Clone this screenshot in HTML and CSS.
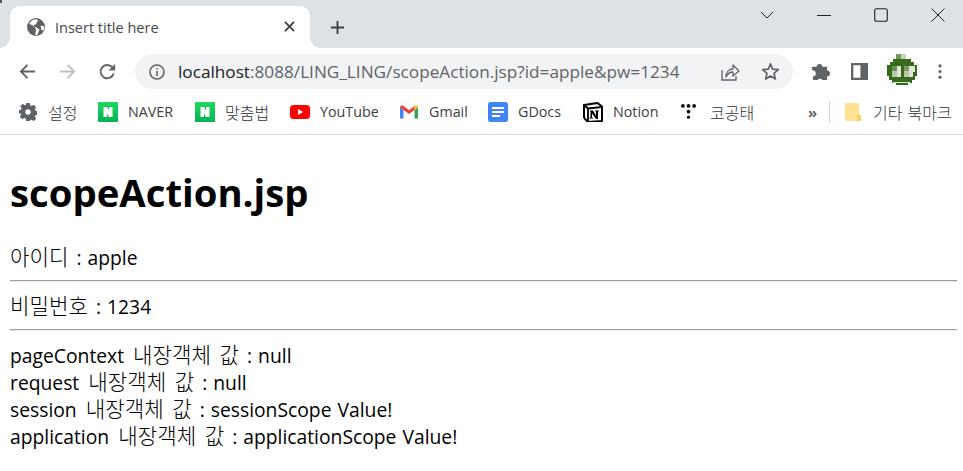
FILE: index.html
```html
<!DOCTYPE html>
<html lang="ko">
<head>
<meta charset="utf-8">
<title>Insert title here</title>
<link rel="stylesheet" href="styles.css">
</head>
<body>
<header class="chrome">
  <div class="tabstrip">
    <div class="tab">
      <svg class="tab-globe" viewBox="0 0 20 20"><circle cx="10" cy="10" r="10" fill="#5f6368"/><path d="M2.500 6.500L7 8.500l2.500 3 .5 2-1 5.500 2.500-.5 1.500-3.500 1-2-3.500-2.500-2-.5-1-2 2.500-1 1-2.500 1.500-1.500-2-1.500-4 .5-3.500 3zM15 8.500l3.500.5.800 2-1 3-2-.5z" fill="#fff"/></svg>
      <span class="tab-title">Insert title here</span>
      <svg class="tab-close" viewBox="0 0 12 12"><path d="M1 1l10 10M11 1L1 11" stroke="#3c4043" stroke-width="2" fill="none"/></svg>
    </div>
    <svg class="newtab" viewBox="0 0 16 16"><path d="M8 1v14M1 8h14" stroke="#3c4043" stroke-width="2" fill="none"/></svg>
    <div class="wincontrols">
      <svg class="winicon" viewBox="0 0 14 14"><path d="M1 4l6 6 6-6" stroke="#202124" fill="none"/></svg>
      <svg class="winicon" viewBox="0 0 14 14"><path d="M0 7.500h14" stroke="#202124" fill="none"/></svg>
      <svg class="winicon" viewBox="0 0 14 14"><rect x=".7" y=".7" width="12.600" height="12.600" rx="2" stroke="#202124" stroke-width="1.100" fill="none"/></svg>
      <svg class="winicon" viewBox="0 0 14 14"><path d="M.5.5l13 13M13.500.5l-13 13" stroke="#202124" fill="none"/></svg>
    </div>
  </div>
  <div class="toolbar">
    <svg class="navicon" viewBox="0 0 20 20"><path d="M18 10H3M10 3l-7 7 7 7" stroke="#5f6368" stroke-width="2" fill="none"/></svg>
    <svg class="navicon" viewBox="0 0 20 20"><path d="M2 10h15M10 3l7 7-7 7" stroke="#bdc1c6" stroke-width="2" fill="none"/></svg>
    <svg class="navicon" viewBox="0 0 20 20"><path d="M16.500 12a7 7 0 1 1-1.500-6.500" stroke="#5f6368" stroke-width="2" fill="none"/><path d="M18 2v7h-7z" fill="#5f6368"/></svg>
    <div class="omnibox">
      <svg class="info" viewBox="0 0 16 16"><circle cx="8" cy="8" r="7" stroke="#5f6368" stroke-width="1.600" fill="none"/><path d="M7.200 7h1.600v5H7.200zM7.200 4h1.600v1.600H7.200z" fill="#5f6368"/></svg>
      <span class="url"><span class="host">localhost</span>:8088/LING_LING/scopeAction.jsp?id=apple&amp;pw=1234</span>
      <svg class="share" viewBox="0 0 20 20"><path d="M2 8v10h14v-4" stroke="#5f6368" stroke-width="1.300" fill="none"/><path d="M6 15c0-5 3-8 7-8V3l6 6-6 5v-4c-3 0-5 1-7 5z" stroke="#5f6368" stroke-width="1.300" fill="#f1f3f4" stroke-linejoin="round"/></svg>
      <svg class="star" viewBox="0 0 20 20"><path d="M10 2l2.300 5.600 6 .5-4.600 3.900 1.400 5.900L10 14.800 4.900 17.900l1.400-5.900L1.700 8.100l6-.5z" stroke="#5f6368" stroke-width="1.800" fill="none" stroke-linejoin="round"/></svg>
    </div>
    <svg class="puzzle" viewBox="0 0 20 20"><path d="M1 8V5h5a3 3 0 0 1 6 0h5v4a3 3 0 0 1 0 6v4h-5a3 3 0 0 0-5 0H2v-4a3 3 0 0 0 0-6z" fill="#5f6368"/></svg>
    <svg class="panel" viewBox="0 0 18 18"><path fill-rule="evenodd" d="M0 0h18v18H0zM2.500 2.500v13H10v-13z" fill="#5f6368"/></svg>
    <div class="avatar-wrap">
      <svg class="avatar" viewBox="0 0 30 32" shape-rendering="crispEdges">
        <path d="M9 0h10v5h5v3h3v3h3v11h-2v4h-3v3h-4v2h-12v-2H5v-3H2v-4H0V11h3V8h3V5h3z" fill="#386a1c"/>
        <path d="M9 0h5v5H9z" fill="#6f9a58"/><path d="M14 0h5v5h-5z" fill="#c5d5bb"/>
        <path d="M5 12h5v5H5z" fill="#6d9458"/><path d="M5 17h5v6H5z" fill="#b5c8aa"/><path d="M10 12h4v11h-4z" fill="#dfe6d8"/>
        <path d="M17 17h5v6h-5z" fill="#b5c8aa"/><path d="M22 12h6v6h-6z" fill="#dfe6d8"/><path d="M22 18h4v5h-4z" fill="#dfe6d8"/><path d="M17 12h5v5h-5z" fill="#7d9c68"/>
        <path d="M6 28h17v1H6z" fill="#dce6d5"/>
      </svg>
    </div>
    <svg class="menu" viewBox="0 0 4 16"><circle cx="2" cy="2" r="1.700" fill="#5f6368"/><circle cx="2" cy="8" r="1.700" fill="#5f6368"/><circle cx="2" cy="14" r="1.700" fill="#5f6368"/></svg>
  </div>
  <nav class="bookmarks">
    <div class="bm">
      <svg class="bm-icon bm-gear" viewBox="0 0 20 20"><path fill-rule="evenodd" d="M8 0h4l.5 2.700 1.600.7 2.300-1.500 2.700 2.700-1.500 2.300.7 1.600 2.700.5v4l-2.700.5-.7 1.600 1.500 2.300-2.700 2.700-2.300-1.500-1.600.7L12 20H8l-.5-2.700-1.600-.7-2.300 1.500-2.700-2.700 1.500-2.300-.7-1.600L-.5 12V8l2.700-.5.700-1.600L1.400 3.600l2.700-2.700 2.300 1.500 1.600-.7zM10 7a3 3 0 1 0 0 6 3 3 0 0 0 0-6z" fill="#5f6368"/></svg>
      <span class="ko">설정</span>
    </div>
    <div class="bm">
      <svg class="bm-icon" viewBox="0 0 20 20"><defs><linearGradient id="n" x1="0" y1="0" x2="0" y2="1"><stop offset="0" stop-color="#1ed760"/><stop offset="1" stop-color="#03b354"/></linearGradient></defs><rect width="20" height="20" fill="url(#n)"/><path d="M5.500 5H9l2 3.500V5h3.500v10H11L9 11.500V15H5.500z" fill="#fff"/></svg>
      <span>NAVER</span>
    </div>
    <div class="bm">
      <svg class="bm-icon" viewBox="0 0 20 20"><rect width="20" height="20" fill="url(#n)"/><path d="M5.500 5H9l2 3.500V5h3.500v10H11L9 11.500V15H5.500z" fill="#fff"/></svg>
      <span class="ko">맞춤법</span>
    </div>
    <div class="bm">
      <svg class="bm-icon" viewBox="0 0 20 20"><rect y="3" width="20" height="14" rx="3.500" fill="#f00"/><path d="M8 7l5 3-5 3z" fill="#fff"/></svg>
      <span>YouTube</span>
    </div>
    <div class="bm">
      <svg class="bm-icon" viewBox="0 0 20 20"><path d="M1 5v11.500h3.500V8z" fill="#4285f4"/><path d="M15.500 8v8.500H19V5z" fill="#34a853"/><path d="M1 5.500C1 3.500 3 3 4.500 4L10 8.200 15.500 4v4L10 12 4.500 8 1 5.500z" fill="#ea4335"/><path d="M15.500 4c1.500-1 3.500-.5 3.500 1.500L15.500 8z" fill="#fbbc04"/></svg>
      <span>Gmail</span>
    </div>
    <div class="bm">
      <svg class="bm-icon" viewBox="0 0 20 20"><rect width="20" height="20" rx="2.500" fill="#4285f4"/><path d="M4 5h12v2H4zM4 9h12v2H4zM4 13h8v2H4z" fill="#fff"/></svg>
      <span>GDocs</span>
    </div>
    <div class="bm">
      <svg class="bm-icon" viewBox="0 0 20 20"><path d="M1 3L14.500 1 19 4.500V19L4.500 20 1 15.500z" fill="#fff" stroke="#000" stroke-width="2" stroke-linejoin="round"/><path d="M1 3l4 3.500L19 5M5 6.500V19" stroke="#000" stroke-width="1.800" fill="none"/><path d="M7 8.500h3l3 5v-4l-1-.3v-.7h4v.7l-1 .3V17h-2L9 11.500v4l1.200.4v.7H6.500v-.7l1-.4V9.500L7 9.200z" fill="#000"/></svg>
      <span>Notion</span>
    </div>
    <div class="bm">
      <svg class="bm-icon bm-dots" viewBox="0 0 16 20"><circle cx="2" cy="4" r="2" fill="#111"/><circle cx="8" cy="4" r="2" fill="#111"/><circle cx="14" cy="4" r="2" fill="#111"/><circle cx="8" cy="10" r="2" fill="#111"/><circle cx="8" cy="16" r="1.700" fill="#111"/></svg>
      <span class="ko">코공태</span>
    </div>
    <div class="bm-end">
      <span class="more">»</span>
      <span class="bm-sep"></span>
      <svg class="bm-folder" viewBox="0 0 16 18"><path d="M1.500 0h11A1.500 1.500 0 0 1 14 1.500V18H2a2 2 0 0 1-2-2V1.500A1.500 1.500 0 0 1 1.500 0z" fill="#fde293"/><path d="M12 12h4v6h-4z" fill="#fbd35c"/></svg>
      <span class="ko">기타 북마크</span>
    </div>
  </nav>
</header>
<main class="page">
  <h1>scopeAction.jsp</h1>
  <p class="field"><span class="ko">아이디</span> : apple</p>
  <hr>
  <p class="field"><span class="ko">비밀번호</span> : 1234</p>
  <hr>
  <p class="line">pageContext <span class="ko">내장객체 값</span> : null</p>
  <p class="line">request <span class="ko">내장객체 값</span> : null</p>
  <p class="line">session <span class="ko">내장객체 값</span> : sessionScope Value!</p>
  <p class="line">application <span class="ko">내장객체 값</span> : applicationScope Value!</p>
</main>
</body>
</html>
```
FILE: styles.css
```css
* { box-sizing: border-box; }
html, body { margin: 0; height: 100%; overflow: hidden; background: #fff; }
body { font-family: "Open Sans", "Noto Sans CJK KR", sans-serif; color: #000; }
svg { display: block; flex: none; }

.chrome { height: 135px; display: flex; flex-direction: column; border-bottom: 1px solid #d9dadc; }

.tabstrip { position: relative; height: 48px; background: #dee1e6; display: flex; align-items: flex-start; padding: 6px 0 0 10px; }
.tabstrip::before { content: ""; position: absolute; left: 0; top: 0; width: 2px; height: 3px; background: #55585c; }
.tab { position: relative; width: 300px; height: 42px; background: #fff; border-radius: 10px 10px 0 0; display: flex; align-items: center; padding: 0 15px 0 16px; }
.tab::before, .tab::after { content: ""; position: absolute; bottom: 0; width: 10px; height: 10px; }
.tab::before { left: -10px; background: radial-gradient(circle at 0 0, #dee1e6 9.500px, #fff 10px); }
.tab::after { right: -10px; background: radial-gradient(circle at 100% 0, #dee1e6 9.500px, #fff 10px); }
.tab-globe { width: 18px; height: 18px; margin-left: 1px; }
.tab-title { flex: 1; margin-left: 10px; font-size: 14.500px; color: #45494d; white-space: nowrap; }
.tab-close { width: 11px; height: 11px; margin-top: -2px; }
.newtab { width: 15px; height: 15px; margin: 14px 0 0 20px; }
.wincontrols { margin-left: auto; display: flex; padding: 2px 18px 0 0; gap: 43px; }
.winicon { width: 14px; height: 14px; }

.toolbar { height: 41px; display: flex; align-items: center; padding: 6px 16px 0 18px; background: #fff; }
.navicon { width: 19px; height: 19px; margin-right: 21px; }
.navicon:nth-child(3) { margin-right: 18px; }
.omnibox { width: 658px; height: 35px; border-radius: 18px; background: #f1f3f4; display: flex; align-items: center; padding: 0 13px 0 14px; }
.info { width: 16px; height: 16px; }
.url { flex: 1; margin-left: 13px; font-size: 17.200px; color: #5f6368; white-space: nowrap; }
.host { color: #202124; }
.share { width: 20px; height: 20px; margin-right: 21px; }
.star { width: 19px; height: 19px; }
.puzzle { width: 19px; height: 19px; margin-left: 18px; }
.panel { width: 17px; height: 17px; margin-left: 21px; }
.avatar-wrap { align-self: flex-start; margin: -7px 0 0 16px; width: 34px; height: 42px; padding: 7px 2px 0 3px; background: #fff; }
.avatar { width: 30px; height: 32px; }
.menu { width: 4px; height: 15px; margin-left: 20px; }

.bookmarks { height: 45px; display: grid; grid-template-columns: 80px 97px 95px 109px 89px 95px 98px 118px 1fr; align-items: center; padding-left: 18px; font-size: 14.300px; color: #3c4043; white-space: nowrap; }
.bm, .bm-end { display: flex; align-items: center; }
.bm-icon { width: 20px; height: 20px; margin-right: 10px; }
.bm-gear { width: 18px; height: 18px; margin: 0 11px 0 1px; }
.bm-dots { width: 15px; height: 19px; margin-right: 14px; }
.bm .ko, .bm-end .ko { font-size: 16px; font-weight: 300; color: #303336; }
.bm-end .ko { word-spacing: 1px; }
.more { width: 13px; margin-left: 9px; font-weight: 700; font-size: 15px; color: #5f6368; }
.bm-sep { width: 1px; height: 20px; background: #d3d5d8; margin: 0 15px 0 8px; }
.bm-folder { width: 16px; height: 18px; margin-right: 12px; }

.page { padding: 0 6px 0 10px; word-spacing: 1px; }
.page .ko { font-size: 21.200px; line-height: 1; font-weight: 300; color: #000; word-spacing: 3px; margin: 0 2px 0 3px; }
.page .field .ko { margin-left: 0; }
h1 { margin: 32px 0 26px; font-size: 38.300px; line-height: 1.33; font-weight: 700; word-spacing: 0; }
.field { margin: 0; font-size: 19.300px; line-height: 27px; }
.line { margin: 0; font-size: 19.300px; line-height: 27px; }
hr { margin: 9px 0 11px; border: 0; border-top: 1px solid #9a9a9a; border-bottom: 1px solid #eee; height: 2px; }
```
